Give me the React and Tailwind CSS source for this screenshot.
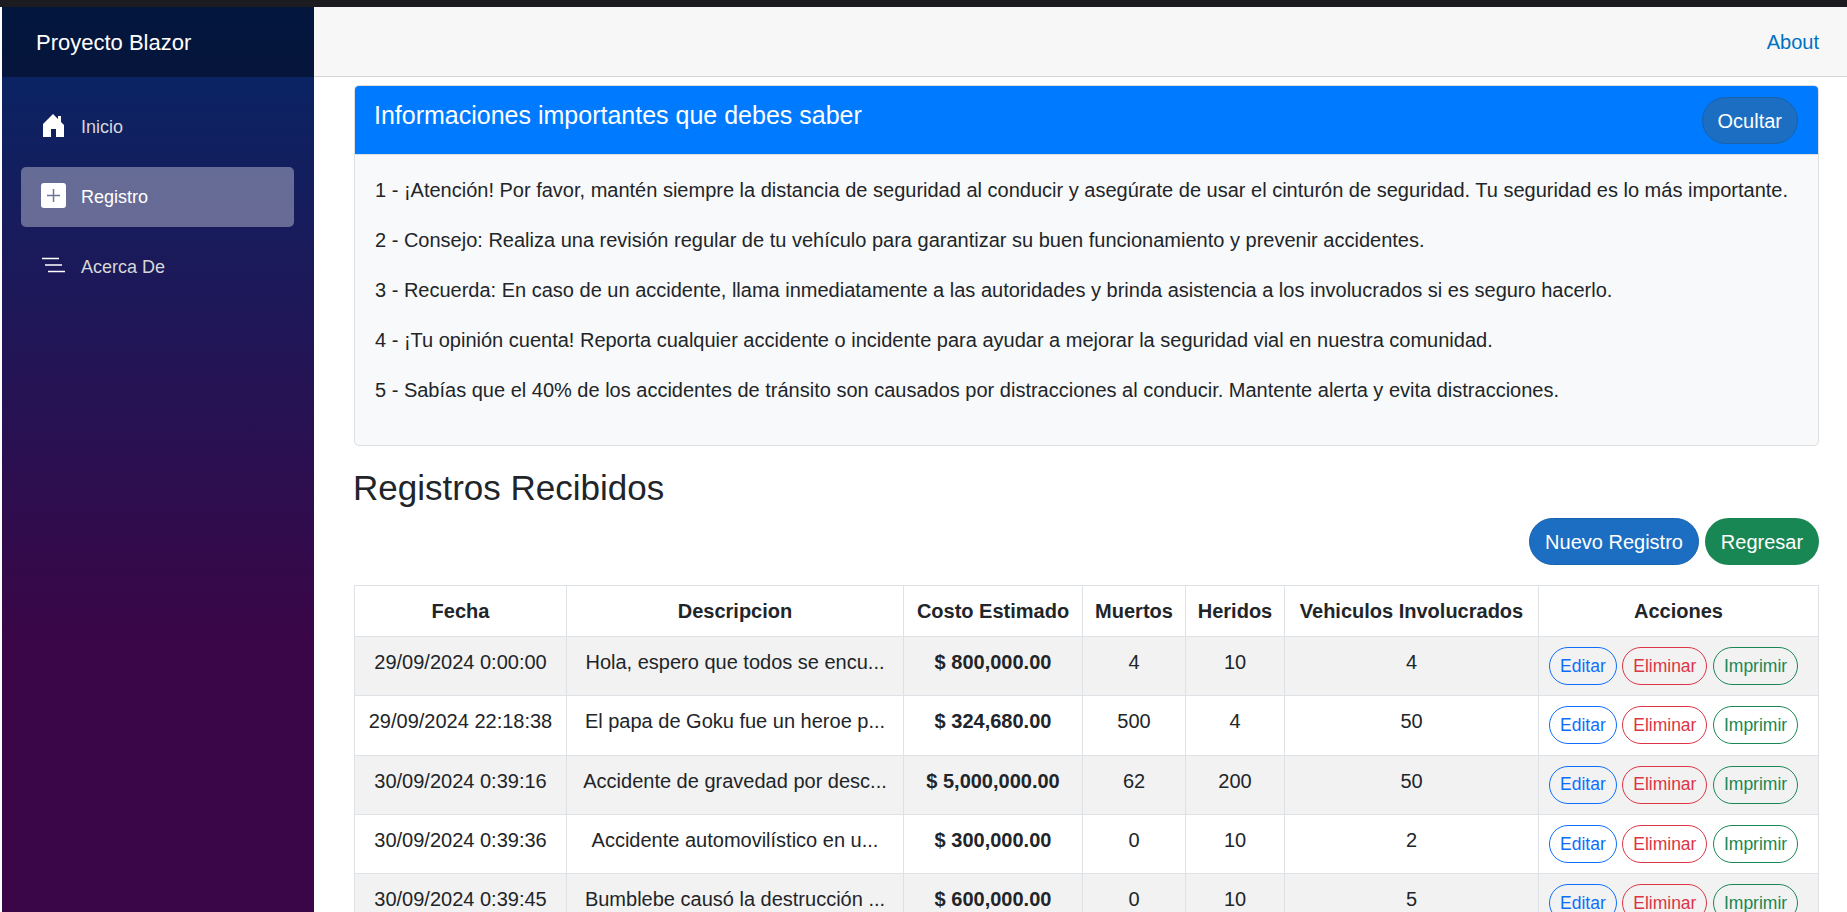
const font = "font-['Liberation_Sans',Arial,sans-serif]";

const tips = [
  "1 - ¡Atención! Por favor, mantén siempre la distancia de seguridad al conducir y asegúrate de usar el cinturón de seguridad. Tu seguridad es lo más importante.",
  "2 - Consejo: Realiza una revisión regular de tu vehículo para garantizar su buen funcionamiento y prevenir accidentes.",
  "3 - Recuerda: En caso de un accidente, llama inmediatamente a las autoridades y brinda asistencia a los involucrados si es seguro hacerlo.",
  "4 - ¡Tu opinión cuenta! Reporta cualquier accidente o incidente para ayudar a mejorar la seguridad vial en nuestra comunidad.",
  "5 - Sabías que el 40% de los accidentes de tránsito son causados por distracciones al conducir. Mantente alerta y evita distracciones.",
];

const rows = [
  ["29/09/2024 0:00:00", "Hola, espero que todos se encu...", "$ 800,000.00", "4", "10", "4"],
  ["29/09/2024 22:18:38", "El papa de Goku fue un heroe p...", "$ 324,680.00", "500", "4", "50"],
  ["30/09/2024 0:39:16", "Accidente de gravedad por desc...", "$ 5,000,000.00", "62", "200", "50"],
  ["30/09/2024 0:39:36", "Accidente automovilístico en u...", "$ 300,000.00", "0", "10", "2"],
  ["30/09/2024 0:39:45", "Bumblebe causó la destrucción ...", "$ 600,000.00", "0", "10", "5"],
];

const headers = ["Fecha", "Descripcion", "Costo Estimado", "Muertos", "Heridos", "Vehiculos Involucrados", "Acciones"];

function HomeIcon() {
  return (
    <svg viewBox="0 0 21 23" className="w-[21px] h-[23px] ml-[2px] mb-[3px] fill-white">
      <path d="M10 0 L15 5 V2 H18 V8 L21 11 V23 H13 V15 H8 V23 H0 V10 Z" />
    </svg>
  );
}

function PlusIcon() {
  return (
    <svg viewBox="0 0 25 25" className="w-[25px] h-[25px] mb-[3px]">
      <rect width="25" height="25" rx="3" fill="#fff" />
      <path d="M12.5 6 V19 M6 12.5 H19" stroke="#6f7299" strokeWidth="1.5" />
    </svg>
  );
}

function ListIcon() {
  return (
    <svg viewBox="0 0 25 25" className="w-[25px] h-[25px] mb-[3px]" stroke="#fff" strokeWidth="1.5">
      <path d="M1 5.5 H18 M4 12 H21 M7 18.5 H24" />
    </svg>
  );
}

function NavItem({ icon, label, active }) {
  return (
    <div
      className={`flex items-center h-[60px] rounded-[5px] pl-[20px] text-[18px] ${
        active ? "bg-white/35 text-white" : "text-[#d7d7d7]"
      }`}
    >
      <span className="w-[40px] shrink-0 flex">{icon}</span>
      {label}
    </div>
  );
}

function SmallButton({ color, children }) {
  return (
    <button className={`h-[38px] px-[10px] rounded-[19px] border text-[17.5px] bg-transparent ${color}`}>
      {children}
    </button>
  );
}

export default function App() {
  return (
    <div className={`h-screen overflow-hidden flex flex-col bg-white text-[#212529] ${font}`}>
      <div className="h-[7px] shrink-0 bg-[#1c1b20]" />
      <div className="flex flex-1 min-h-0">
        <aside className="w-[312px] ml-[2px] shrink-0 bg-linear-to-b/srgb from-[#052767] to-[#3a0647] to-70%">
          <div className="h-[70px] flex items-center pl-[34px] bg-black/40 text-white text-[22px]">Proyecto Blazor</div>
          <nav className="pt-[20px] pl-[19px] pr-[20px] flex flex-col gap-[10px]">
            <NavItem icon={<HomeIcon />} label="Inicio" />
            <NavItem icon={<PlusIcon />} label="Registro" active />
            <NavItem icon={<ListIcon />} label="Acerca De" />
          </nav>
        </aside>
        <main className="flex-1 min-w-0">
          <header className="h-[70px] flex items-center justify-end pr-[28px] bg-[#f7f7f7] border-b border-[#d6d5d5] text-[20px] text-[#0071c1]">
            About
          </header>
          <div className="pl-[40px] pr-[28px] pt-[8px]">
            <section className="rounded-[5px] border border-[#dfdfdf] bg-[#f8f9fa] overflow-hidden">
              <div className="h-[69px] flex items-start justify-between bg-[#007bff] text-white pl-[19px] pr-[20px] pt-[11px] border-b border-[#dfdfdf]">
                <h5 className="text-[25px] leading-[30px] mt-[3px]">Informaciones importantes que debes saber</h5>
                <button className="h-[47px] px-[15px] rounded-[24px] border border-[#1861ac] bg-[#1b6ec2] text-[20px] text-white">
                  Ocultar
                </button>
              </div>
              <div className="pt-[20px] pb-[25px] px-[20px] h-[290px]">
                {tips.map(t => (
                  <p key={t} className="text-[20px] leading-[30px] mb-[20px]">{t}</p>
                ))}
              </div>
            </section>
            <h3 className="text-[35px] leading-[42px] mt-[21px] ml-[-1px]">Registros Recibidos</h3>
            <div className="flex justify-end gap-[6px] mt-[9px]">
              <button className="h-[47px] w-[170px] rounded-[24px] border border-[#1861ac] bg-[#1b6ec2] text-[20px] text-white">
                Nuevo Registro
              </button>
              <button className="h-[47px] w-[114px] rounded-[24px] bg-[#198754] text-[20px] text-white">
                Regresar
              </button>
            </div>
            <table className="mt-[20px] w-[1464px] table-fixed border-collapse text-[20px]">
              <colgroup>
                <col className="w-[212px]" />
                <col className="w-[337px]" />
                <col className="w-[179px]" />
                <col className="w-[103px]" />
                <col className="w-[99px]" />
                <col className="w-[254px]" />
                <col className="w-[280px]" />
              </colgroup>
              <thead>
                <tr className="h-[51px]">
                  {headers.map(h => (
                    <th key={h} className="border border-[#dee2e6] font-bold text-center align-middle">{h}</th>
                  ))}
                </tr>
              </thead>
              <tbody>
                {rows.map((r, i) => (
                  <tr key={r[0]} className={`h-[59.25px] ${i % 2 === 0 ? "bg-[#f2f2f2]" : ""}`}>
                    {r.map((c, j) => (
                      <td
                        key={j}
                        className={`border border-[#dee2e6] text-center align-top pt-[10px] ${j === 2 ? "font-bold" : ""}`}
                      >
                        {c}
                      </td>
                    ))}
                    <td className="border border-[#dee2e6] pl-[10px] pt-[10px] align-top">
                      <div className="flex gap-[5.5px]">
                        <SmallButton color="border-[#0d6efd] text-[#0d6efd]">Editar</SmallButton>
                        <SmallButton color="border-[#dc3545] text-[#dc3545]">Eliminar</SmallButton>
                        <SmallButton color="border-[#198754] text-[#198754]">Imprimir</SmallButton>
                      </div>
                    </td>
                  </tr>
                ))}
              </tbody>
            </table>
          </div>
        </main>
      </div>
    </div>
  );
}
